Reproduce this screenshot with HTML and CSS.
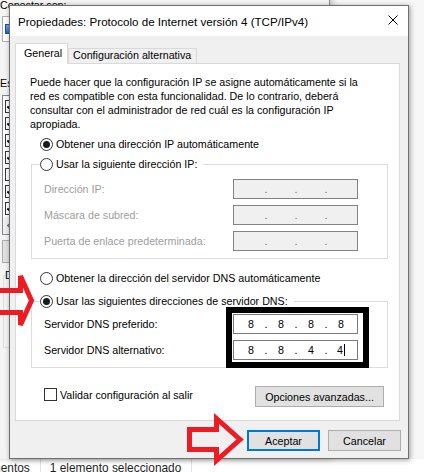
FILE: index.html
```html
<!DOCTYPE html>
<html lang="es">
<head>
<meta charset="utf-8">
<title>Propiedades: Protocolo de Internet versión 4 (TCP/IPv4)</title>
<link rel="stylesheet" href="styles.css">
</head>
<body>
<div class="desk">

  <div class="explorer">
    <div class="explorer-main"></div>
    <div class="statusbar">
      <span class="status-item">4 elementos</span>
      <span class="status-sep"></span>
      <span class="status-item">1 elemento seleccionado</span>
      <span class="status-sep"></span>
    </div>
  </div>

  <div class="backdlg">
    <div class="bl-label">Conectar con:</div>
    <div class="adapter"><span class="adapter-icon"></span></div>
    <div class="bl-label bl-gap">Esta conexión usa los siguientes elementos:</div>
    <div class="list">
      <div class="item"><span class="cb on"></span></div>
      <div class="item"><span class="cb on"></span></div>
      <div class="item"><span class="cb on"></span></div>
      <div class="item"><span class="cb on"></span></div>
      <div class="item"><span class="cb"></span></div>
      <div class="item"><span class="cb on"></span></div>
      <div class="item"><span class="cb on"></span></div>
      <div class="hscroll"><span class="chev"></span></div>
    </div>
    <div class="bbtn"></div>
    <fieldset class="bdesc"><legend>Descripción</legend></fieldset>
  </div>

  <div class="dialog">
    <div class="titlebar">
      <span class="title">Propiedades: Protocolo de Internet versión 4 (TCP/IPv4)</span>
      <svg class="close" viewBox="0 0 10 10" width="10" height="10"><path d="M0.5 0.5 L9.5 9.5 M9.5 0.5 L0.5 9.5" stroke="#000" stroke-width="1" fill="none"/></svg>
    </div>
    <div class="dlg-body">
      <div class="tabs">
        <div class="tab active">General</div>
        <div class="tab">Configuración alternativa</div>
      </div>
      <div class="panel">
        <p class="intro">Puede hacer que la configuración IP se asigne automáticamente si la<br>red es compatible con esta funcionalidad. De lo contrario, deberá<br>consultar con el administrador de red cuál es la configuración IP<br>apropiada.</p>

        <div class="radio-row r1"><span class="radio on"></span><span>Obtener una dirección IP automáticamente</span></div>

        <fieldset class="group g1">
          <legend class="legend"><span class="radio"></span><span>Usar la siguiente dirección IP:</span></legend>
          <div class="field-row"><span class="flabel off">Dirección IP:</span><span class="ipbox off"><span class="seg"></span><span class="dot">.</span><span class="seg"></span><span class="dot">.</span><span class="seg"></span><span class="dot">.</span><span class="seg"></span></span></div>
          <div class="field-row"><span class="flabel off">Máscara de subred:</span><span class="ipbox off"><span class="seg"></span><span class="dot">.</span><span class="seg"></span><span class="dot">.</span><span class="seg"></span><span class="dot">.</span><span class="seg"></span></span></div>
          <div class="field-row"><span class="flabel off">Puerta de enlace predeterminada:</span><span class="ipbox off"><span class="seg"></span><span class="dot">.</span><span class="seg"></span><span class="dot">.</span><span class="seg"></span><span class="dot">.</span><span class="seg"></span></span></div>
        </fieldset>

        <div class="radio-row r3"><span class="radio"></span><span>Obtener la dirección del servidor DNS automáticamente</span></div>

        <fieldset class="group g2">
          <legend class="legend"><span class="radio on"></span><span>Usar las siguientes direcciones de servidor DNS:</span></legend>
          <div class="field-row"><span class="flabel">Servidor DNS preferido:</span><span class="ipbox"><span class="seg">8</span><span class="dot">.</span><span class="seg">8</span><span class="dot">.</span><span class="seg">8</span><span class="dot">.</span><span class="seg">8</span></span></div>
          <div class="field-row"><span class="flabel">Servidor DNS alternativo:</span><span class="ipbox"><span class="seg">8</span><span class="dot">.</span><span class="seg">8</span><span class="dot">.</span><span class="seg">4</span><span class="dot">.</span><span class="seg">4<span class="caret"></span></span></span></div>
        </fieldset>

        <div class="bottom-row">
          <div class="chk-wrap"><span class="chk"></span><span>Validar configuración al salir</span></div>
          <div class="btn btn-adv">Opciones avanzadas...</div>
        </div>
      </div>
      <div class="dlg-buttons">
        <div class="btn btn-ok">Aceptar</div>
        <div class="btn btn-cancel">Cancelar</div>
      </div>
    </div>
  </div>

  <div class="dns-highlight"></div>

  <svg class="annot" width="424" height="472" viewBox="0 0 424 472">
    <path d="M-10 290.5 H20.5 V276 L31.5 300.5 L20.5 325 V312.5 H-10 Z" fill="none" stroke="#ed1c24" stroke-width="5" stroke-linejoin="miter"/>
    <path d="M189.5 429.5 H216.5 V418.5 L240 439.5 L216.5 460.5 V449.5 H189.5 Z" fill="none" stroke="#ed1c24" stroke-width="5" stroke-linejoin="miter"/>
  </svg>
</div>
</body>
</html>
```

FILE: styles.css
```css
* { box-sizing: border-box; }
html, body { margin: 0; padding: 0; }
body {
  width: 424px;
  height: 472px;
  overflow: hidden;
  font-family: "Liberation Sans", Arial, sans-serif;
  font-size: 10.7px;
  color: #000;
  background: #efefef;
}
.desk {
  position: relative;
  width: 424px;
  height: 472px;
  overflow: hidden;
  background: #efefef;
}

/* Explorer window behind */
.explorer {
  position: absolute;
  left: -40px;
  top: 0;
  width: 464px;
  height: 481px;
  background: #f7f7f7;
  display: flex;
  flex-direction: column;
}
.explorer-main { flex: 1; }
.statusbar {
  height: 22px;
  flex: none;
  display: flex;
  align-items: stretch;
  padding-left: 5px;
  font-size: 11.9px;
  line-height: 18px;
  color: #1e1e1e;
  background: #fff;
  white-space: nowrap;
}
.status-sep { width: 1px; background: #e3e3e3; margin: 0 9px 0 10px; }

/* Ethernet properties dialog behind */
.backdlg {
  position: absolute;
  left: -11px;
  top: -28px;
  width: 341px;
  height: 487px;
  background: #f4f4f4;
  border-right: 1px solid #8c8c8c;
  box-shadow: 3px 0 6px rgba(0, 0, 0, 0.18);
  padding: 26px 0 0 11px;
  line-height: 14px;
  white-space: nowrap;
}
.bl-gap { margin-top: 34px; }
.adapter {
  margin: 4px 0 0 2px;
  width: 300px;
  height: 26px;
  background: #fff;
  border: 1px solid #adadad;
  display: flex;
  align-items: center;
  padding-left: 2px;
}
.adapter-icon {
  width: 16px;
  height: 10px;
  background: linear-gradient(#6fa8e8, #2a64c0);
  border: 1px solid #1d4f9e;
}
.list {
  margin: 5px 0 0 2px;
  width: 300px;
  background: #fff;
  border: 1px solid #828790;
  padding-top: 2px;
  overflow: hidden;
}
.item {
  height: 17px;
  display: flex;
  align-items: center;
  padding-left: 2px;
}
.cb {
  width: 13px;
  height: 13px;
  border: 1px solid #333;
  background: #fff;
  display: flex;
  align-items: center;
  justify-content: center;
  flex: none;
}
.cb.on::after {
  content: "";
  width: 3px;
  height: 7px;
  border-right: 2px solid #000;
  border-bottom: 2px solid #000;
  transform: translateY(-1px) rotate(40deg);
}
.hscroll {
  height: 17px;
  background: #f0f0f0;
  display: flex;
  align-items: center;
  padding-left: 3px;
}
.chev {
  width: 5px;
  height: 5px;
  border-left: 1.5px solid #606060;
  border-bottom: 1.5px solid #606060;
  transform: rotate(45deg);
  margin-left: 2px;
}
.bbtn {
  margin: 5px 0 0 2px;
  width: 75px;
  height: 23px;
  background: #e1e1e1;
  border: 1px solid #adadad;
}
.bdesc {
  margin: 5px 0 0 3px;
  padding: 4px 0 0 1px;
  width: 300px;
  height: 80px;
  border: 1px solid #dcdcdc;
}
.bdesc legend { padding: 0 2px 0 0; line-height: 14px; }

/* Main dialog */
.dialog {
  position: absolute;
  left: 9px;
  top: 5px;
  width: 400px;
  height: 454px;
  border: 1px solid #6f6f6f;
  background: #f0f0f0;
  box-shadow: 1px 1px 5px rgba(0, 0, 0, 0.4);
  display: flex;
  flex-direction: column;
}
.titlebar {
  height: 30px;
  flex: none;
  background: #fff;
  display: flex;
  align-items: center;
  padding-left: 8px;
}
.title { flex: 1; font-size: 11.6px; white-space: nowrap; }
.close { flex: none; margin-right: 10px; margin-bottom: 2px; }

.dlg-body {
  flex: 1;
  padding: 7px 8px 0 5px;
}
.tabs {
  display: flex;
  align-items: flex-end;
  height: 20px;
  position: relative;
  z-index: 1;
}
.tab {
  height: 15px;
  width: 129px;
  border: 1px solid #d9d9d9;
  border-bottom: 0;
  padding-left: 4px;
  line-height: 12px;
  background: #f0f0f0;
  white-space: nowrap;
}
.tab.active {
  width: 53px;
  height: 21px;
  margin-bottom: -1px;
  padding: 2px 0 0 8px;
  line-height: 14px;
  background: #fff;
}
.panel {
  height: 358px;
  background: #fff;
  border: 1px solid #d9d9d9;
  padding: 11px 0 0 14px;
}
.intro {
  margin: 0;
  line-height: 14px;
  white-space: nowrap;
}
.radio-row, .legend {
  display: flex;
  align-items: center;
  height: 14px;
  line-height: 14px;
  white-space: nowrap;
}
.radio-row { margin-left: 10px; }
.r1 { margin-top: 6px; }
.r3 { margin-top: 12px; }
.radio {
  width: 13px;
  height: 13px;
  flex: none;
  border: 1px solid #333;
  border-radius: 50%;
  background: #fff;
  margin-right: 3px;
  display: flex;
  align-items: center;
  justify-content: center;
}
.radio.on::after {
  content: "";
  width: 7px;
  height: 7px;
  border-radius: 50%;
  background: #1a1a1a;
}
.group {
  margin: 6px 0 0 1px;
  width: 357px;
  border: 1px solid #dcdcdc;
  padding: 8px 0 7px 8px;
  min-width: 0;
}
.g2 { margin-top: 9px; padding-top: 6px; }
.legend { padding: 0 6px 0 0; margin: 0; }
.field-row {
  display: flex;
  align-items: center;
  height: 20px;
  padding-left: 4px;
}
.field-row + .field-row { margin-top: 6px; }
.flabel { width: 189px; flex: none; white-space: nowrap; }
.flabel.off { color: #9d9d9d; }
.ipbox {
  width: 125px;
  height: 20px;
  flex: none;
  border: 1px solid #7a7a7a;
  background: #fff;
  display: flex;
  align-items: center;
  padding-left: 5px;
}
.ipbox.off { background: #f0f0f0; border-color: #828282; color: #6d6d6d; }
.seg { width: 24px; text-align: center; }
.dot { width: 6px; text-align: center; }
.caret {
  display: inline-block;
  width: 1px;
  height: 12px;
  background: #000;
  vertical-align: -2px;
  margin-left: 1px;
}
.bottom-row {
  display: flex;
  margin-top: 18px;
  height: 21px;
}
.chk-wrap {
  display: flex;
  align-items: center;
  height: 13px;
  margin: 2px 0 0 14px;
  white-space: nowrap;
}
.chk {
  width: 13px;
  height: 13px;
  border: 1px solid #333;
  background: #fff;
  margin-right: 3px;
  flex: none;
}
.btn {
  height: 21px;
  background: #e1e1e1;
  border: 1px solid #adadad;
  display: flex;
  align-items: center;
  justify-content: center;
  white-space: nowrap;
}
.btn-adv { width: 129px; margin: 0 15px 0 auto; }
.dlg-buttons {
  display: flex;
  justify-content: flex-end;
  gap: 8px;
  margin: 9px -1px 0 0;
}
.btn-ok, .btn-cancel { width: 73px; }
.btn-ok { border: 2px solid #0078d7; }

/* Annotations drawn over the screenshot */
.dns-highlight {
  position: absolute;
  left: 226px;
  top: 307px;
  width: 143px;
  height: 61px;
  border: 6px solid #000;
}
.annot {
  position: absolute;
  left: 0;
  top: 0;
  pointer-events: none;
}
```
